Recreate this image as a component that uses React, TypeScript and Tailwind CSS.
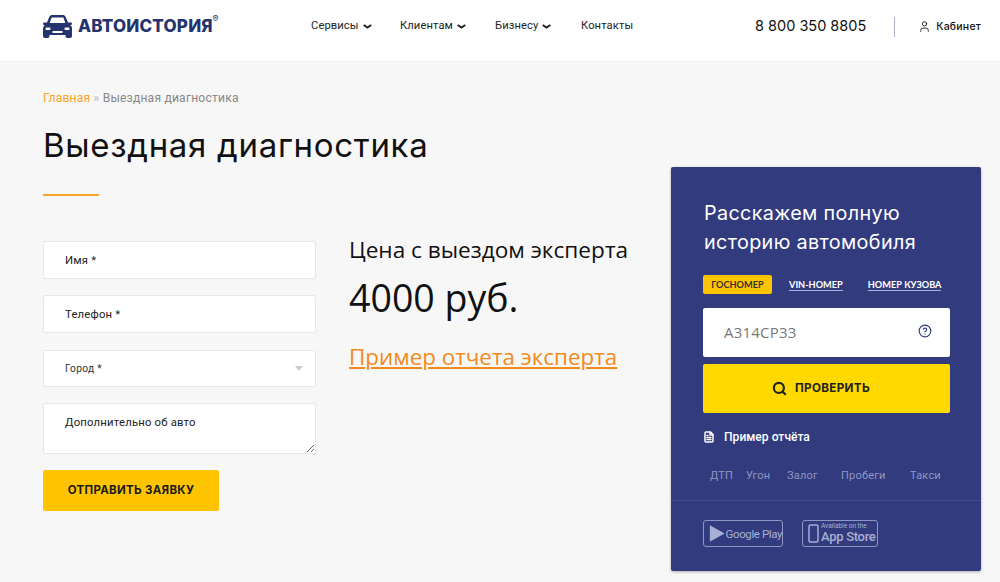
import { Search, User, FileText, CircleHelp } from 'lucide-react';

const navItems = [
  { label: 'Сервисы', arrow: true, cls: 'w-[89px]' },
  { label: 'Клиентам', arrow: true, cls: 'w-[95px]' },
  { label: 'Бизнесу', arrow: true, cls: 'w-[86px]' },
  { label: 'Контакты', arrow: false, cls: '' },
];

const tags = [
  { label: 'ДТП', cls: 'w-[36px]' },
  { label: 'Угон', cls: 'w-[41px]' },
  { label: 'Залог', cls: 'w-[54px]' },
  { label: 'Пробеги', cls: 'w-[69px]' },
  { label: 'Такси', cls: '' },
];

function CarLogo() {
  return (
    <svg width="29" height="23" viewBox="0 0 29 23" fill="#25336f">
      <path d="M6.5 1.5C7 .6 8 0 9 0h11c1 0 2 .6 2.500 1.500L25 7.500h2.500c.8 0 1.500.5 1.500 1.200s-.7 1.300-1.500 1.300h-.3c1 .8 1.800 1.800 1.800 3V21c0 1-.8 2-2 2h-2.500c-1.200 0-2-1-2-2v-1H6.500v1c0 1-.8 2-2 2H2c-1.200 0-2-1-2-2v-7.500c0-1.200.8-2.200 1.800-3h-.3C.7 10 0 9.400 0 8.700s.7-1.200 1.500-1.200H4L6.500 1.500zM8.600 2.500 6.700 8h15.600l-1.900-5.500H8.600z" fillRule="evenodd" />
      <rect x="2.500" y="12.500" width="5" height="2.500" rx="1" fill="#fff" />
      <rect x="21.500" y="12.500" width="5" height="2.500" rx="1" fill="#fff" />
      <rect x="9.500" y="16" width="10" height="2" fill="#fff" />
    </svg>
  );
}

function Header() {
  return (
    <header className="h-[62px] bg-white border-b border-[#eeeeee] flex items-center pl-[43px] pr-[19px] pb-[8px]">
      <div className="flex items-center w-[268px] gap-[6px]">
        <CarLogo />
        <span className="relative font-['Inter',sans-serif] font-extrabold text-[17px] text-[#25336f] tracking-[0.2px]">
          АВТОИСТОРИЯ
          <span className="absolute -right-[6px] -top-[2px] text-[9px] font-normal">®</span>
        </span>
      </div>
      <nav className="flex items-center font-['Roboto',sans-serif] text-[11.200px] text-[#222] tracking-[0.1px]">
        {navItems.map((item) => (
          <div key={item.label} className={'flex items-center gap-[4px] ' + item.cls}>
            {item.label}
            {item.arrow && (
              <svg width="9" height="5" viewBox="0 0 9 5" fill="none" stroke="#222" strokeWidth="2"><path d="M.7 1 4.500 3.600 8.300 1" /></svg>
            )}
          </div>
        ))}
      </nav>
      <div className="ml-auto flex items-center font-['Inter',sans-serif] text-[#111]">
        <span className="text-[14.500px] mt-[-1px]">8 800 350 8805</span>
        <div className="h-[20px] w-px bg-[#aab0cc] ml-[28px] mr-[23px]" />
        <User size={13} strokeWidth={1.600} />
        <span className="ml-[5px] text-[10.500px] font-medium tracking-[0.2px]">Кабинет</span>
      </div>
    </header>
  );
}

function RequestForm() {
  const inputCls = "h-[38px] w-full bg-white border border-[#e8e8e8] rounded-[2px] pl-[21px] text-[11.300px] text-[#222] placeholder:text-[#222] outline-none font-['Roboto',sans-serif] tracking-[0.2px]";
  return (
    <form className="w-[273px] flex flex-col">
      <input className={inputCls} placeholder="Имя *" />
      <input className={inputCls + ' mt-[16px]'} placeholder="Телефон *" />
      <div className="mt-[17px] h-[37px] bg-white border border-[#e8e8e8] rounded-[2px] pl-[21px] pr-[12px] flex items-center justify-between font-['Roboto',sans-serif] text-[10.200px] text-[#333] tracking-[0.3px]">
        Город *
        <span className="w-0 h-0 border-l-[4px] border-r-[4px] border-t-[5px] border-l-transparent border-r-transparent border-t-[#cccccc]" />
      </div>
      <textarea
        className="mt-[16px] h-[51px] w-full block bg-white border border-[#e8e8e8] rounded-[2px] pl-[21px] pt-[11px] text-[11.300px] text-[#222] placeholder:text-[#222] outline-none font-['Roboto',sans-serif] tracking-[0.2px]"
        placeholder="Дополнительно об авто"
      />
      <button type="button" className="mt-[16px] h-[41px] w-[176px] bg-[#ffc400] rounded-[2px] font-['Inter',sans-serif] font-bold text-[11.500px] tracking-[0.3px] text-[#1b1b1b]">
        ОТПРАВИТЬ ЗАЯВКУ
      </button>
    </form>
  );
}

function PriceBlock() {
  return (
    <div className="ml-[33px] font-['Open_Sans',sans-serif] text-[#111]">
      <div className="text-[22.600px] leading-[30px] mt-[-6px] whitespace-nowrap">Цена с выездом эксперта</div>
      <div className="text-[37.500px] leading-[48px] mt-[9px] font-medium">4000 руб.</div>
      <a className="block mt-[20px] text-[22.400px] leading-[30px] text-[#f28a1c] underline whitespace-nowrap">Пример отчета эксперта</a>
    </div>
  );
}

function StoreBadges() {
  return (
    <div className="flex gap-[19px] pl-[32px] pt-[19px]">
      <div className="h-[27px] w-[80px] border border-[#8d96c4] rounded-[3px] flex items-center pl-[5px] gap-[1px] text-[#a8afd4]">
        <svg width="18" height="19" viewBox="0 0 18 19" fill="#a8afd4"><path d="M1 0v19l17-9.500z" /></svg>
        <span className="font-['Roboto',sans-serif] text-[11.500px] tracking-[-0.4px] whitespace-nowrap mt-[3px]">Google Play</span>
      </div>
      <div className="h-[27px] w-[76px] border border-[#8d96c4] rounded-[3px] flex items-center pl-[5px] text-[#a8afd4]">
        <svg width="11" height="19" viewBox="0 0 11 19" fill="none" stroke="#a8afd4" strokeWidth="1.500"><rect x="1" y="1" width="9" height="17" rx="1.500" /></svg>
        <div className="ml-[2px] font-['Roboto',sans-serif] flex flex-col">
          <span className="text-[6.500px] leading-[7px] whitespace-nowrap">Available on the</span>
          <span className="text-[13px] leading-[13px] font-medium tracking-[-0.3px] whitespace-nowrap">App Store</span>
        </div>
      </div>
    </div>
  );
}

function CheckCard() {
  return (
    <aside className="w-[310px] h-[404px] bg-[#323b7e] rounded-[2px] shadow-[0_1px_3px_rgba(0,0,0,0.3)] flex flex-col">
      <div className="pl-[32px] pr-[31px] pt-[32px]">
        <h2 className="ml-[1px] font-['Inter',sans-serif] text-white text-[19.800px] leading-[29px] tracking-[0.35px]">
          Расскажем полную<br />историю автомобиля
        </h2>
        <div className="mt-[18px] flex items-center whitespace-nowrap font-['Lato',sans-serif] font-bold text-[9.200px]">
          <span className="h-[19px] w-[69px] bg-[#ffc400] rounded-[2px] flex items-center justify-center text-[#333]">ГОСНОМЕР</span>
          <span className="ml-[17px] text-white border-b border-[#aab0dd] leading-[11px]">VIN-НОМЕР</span>
          <span className="ml-[25px] text-white border-b border-[#aab0dd] leading-[11px]">НОМЕР КУЗОВА</span>
        </div>
        <div className="mt-[14px] h-[49px] bg-white rounded-[2px] flex items-center pl-[21px] pr-[18px] justify-between">
          <span className="font-['Open_Sans',sans-serif] text-[15px] text-[#777] tracking-[0.2px]">А314СР33</span>
          <CircleHelp size={14} strokeWidth={2} className="text-[#323b7e] mt-[-4px]" />
        </div>
        <button type="button" className="mt-[7px] h-[49px] w-full bg-[#ffd900] rounded-[2px] pr-[11px] flex items-center justify-center gap-[8px] font-['Inter',sans-serif] font-bold text-[11.700px] tracking-[0.3px] text-[#222]">
          <Search size={15} strokeWidth={3.500} />
          ПРОВЕРИТЬ
        </button>
        <div className="mt-[15px] flex items-center gap-[9px] text-white font-['Roboto',sans-serif] font-medium text-[12.100px]">
          <FileText size={12} strokeWidth={3} />
          Пример отчёта
        </div>
        <div className="mt-[22px] ml-[7px] flex font-['Roboto',sans-serif] text-[11px] text-[#8f97c4] tracking-[0.2px]">
          {tags.map((t) => (
            <span key={t.label} className={t.cls}>{t.label}</span>
          ))}
        </div>
      </div>
      <div className="mt-[15px] border-t border-[#414a8c]">
        <StoreBadges />
      </div>
    </aside>
  );
}

export default function App() {
  return (
    <div className="h-[582px] w-[1000px] overflow-hidden bg-[#f7f7f7]">
      <Header />
      <main className="flex pl-[43px] pr-[19px] justify-between">
        <div>
          <div className="mt-[28px] font-['Roboto',sans-serif] text-[12.100px] leading-[16px] text-[#888] tracking-[0.2px]">
            <span className="text-[#f5a623]">Главная</span> <span className="text-[#bbb]">»</span> Выездная диагностика
          </div>
          <h1 className="mt-[19px] font-['Inter',sans-serif] text-[33px] leading-[40px] text-[#111] tracking-[0.7px] whitespace-nowrap">
            Выездная диагностика
          </h1>
          <div className="mt-[29px] h-[2px] w-[56px] bg-[#f5a623]" />
          <div className="mt-[45px] flex">
            <RequestForm />
            <PriceBlock />
          </div>
        </div>
        <div className="mt-[105px]">
          <CheckCard />
        </div>
      </main>
    </div>
  );
}
